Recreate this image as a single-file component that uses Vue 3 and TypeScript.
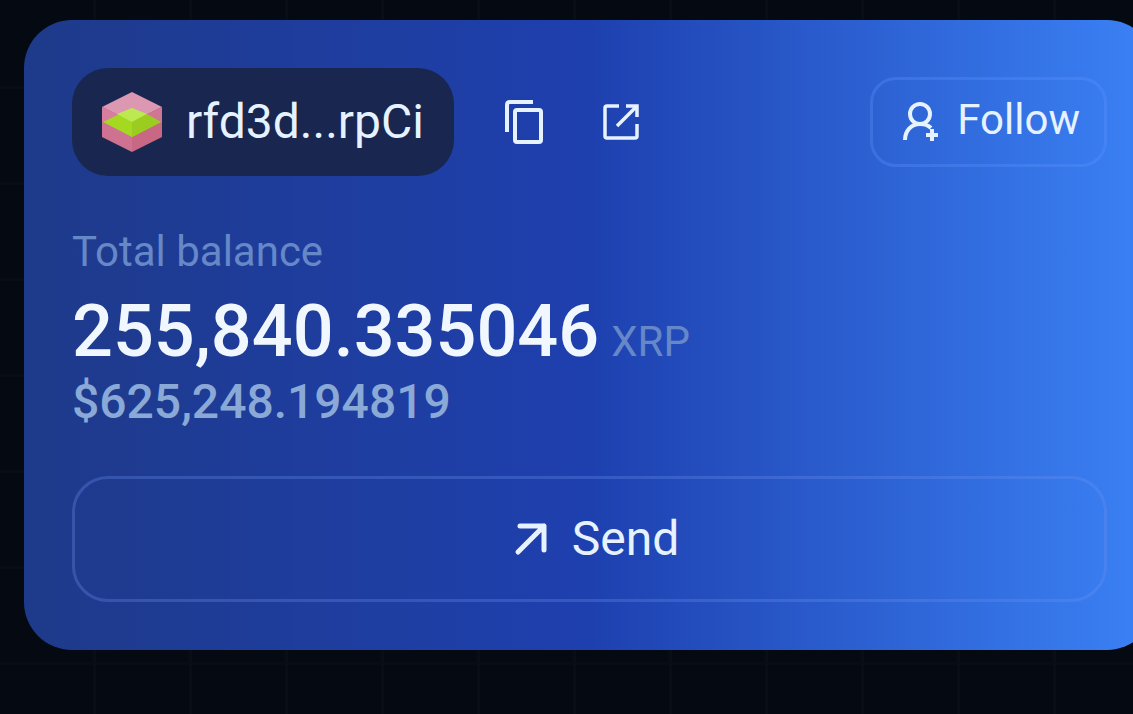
<script setup lang="ts">
import { ref } from 'vue'

interface Wallet {
  address: string
  balance: string
  currency: string
  fiat: string
}

const wallet: Wallet = {
  address: 'rfd3d...rpCi',
  balance: '255,840.335046',
  currency: 'XRP',
  fiat: '$625,248.194819',
}

const following = ref(false)
</script>

<template>
  <main class="page">
    <section class="card">
      <header class="top">
        <button class="address" type="button">
          <svg class="cube" viewBox="0 0 60 60" aria-hidden="true">
            <path d="M30 0 60 15 30 30 0 15Z" fill="#dc98b2" />
            <path d="M0 15 30 30V60L0 45Z" fill="#cf7291" />
            <path d="M60 15 30 30V60L60 45Z" fill="#c96885" />
            <path d="M0 15 17 23 1 30 0 30Z" fill="#d77d9e" />
            <path d="M60 15 43 23 59 30 60 30Z" fill="#cf7694" />
            <path d="M30 16 59 30 30 45 1 30Z" fill="#a5d921" />
            <path d="M30 16 45 22 30 30 15 22Z" fill="#bce951" />
            <path d="M30 30 45 22 59 30 30 45Z" fill="#9bcd20" />
          </svg>
          <span>{{ wallet.address }}</span>
        </button>
        <button class="icon-button" type="button" aria-label="Copy address">
          <svg width="40" height="46" viewBox="0 0 40 46" fill="none" stroke="currentColor" stroke-width="4" aria-hidden="true">
            <path d="M3 33V6Q3 3 6 3H29" />
            <rect x="11" y="11" width="26" height="32" rx="2" />
          </svg>
        </button>
        <a class="icon-button" href="#explorer" aria-label="Open in explorer">
          <svg width="38" height="38" viewBox="0 0 38 38" fill="none" stroke="currentColor" stroke-width="3.5" aria-hidden="true">
            <path d="M17 3H5Q3 3 3 5V33Q3 35 5 35H33Q35 35 35 33V21" />
            <path d="M24 3H35V14M35 3 15 23" />
          </svg>
        </a>
        <button class="follow" type="button" :aria-pressed="following" @click="following = !following">
          <svg width="38" height="44" viewBox="0 -4 38 44" fill="none" stroke="currentColor" stroke-width="4" aria-hidden="true">
            <circle cx="17" cy="12" r="10" />
            <path d="M2 38C2 29 8 22 17 22C21 22 25 23 28 26" />
            <path d="M29 27V39M23 33H35" />
          </svg>
          <span>Follow</span>
        </button>
      </header>

      <div class="totals">
        <p class="label">Total balance</p>
        <p class="balance">
          <strong>{{ wallet.balance }}</strong>
          <span>{{ wallet.currency }}</span>
        </p>
        <p class="fiat">{{ wallet.fiat }}</p>
      </div>

      <button class="send" type="button">
        <svg width="34" height="34" viewBox="0 0 34 34" fill="none" stroke="currentColor" stroke-width="5" stroke-linecap="round" stroke-linejoin="round" aria-hidden="true">
          <path d="M6 4H30V28M30 4 4 30" />
        </svg>
        <span>Send</span>
      </button>
    </section>
  </main>
</template>

<style>
body {
  margin: 0;
  background: #050a12;
}
</style>

<style scoped>
.page {
  box-sizing: border-box;
  min-height: 100vh;
  padding: 20px 0 64px 24px;
  overflow: hidden;
  background-color: #050a12;
  background-image:
    linear-gradient(to right, #090e16 3px, transparent 3px),
    linear-gradient(to bottom, #080d15 3px, transparent 3px);
  background-size: 96px 96px;
  background-position: 93px 86px;
  font-family: Roboto, "Liberation Sans", sans-serif;
  color: #e6f2ff;
}

.card {
  margin-right: -22px;
  padding: 48px;
  border-radius: 48px;
  background: linear-gradient(to right, #1e3a8a, #1e40af 50%, #3b82f6);
}

button {
  margin: 0;
  border: 0;
  background: none;
  font: inherit;
  color: inherit;
  cursor: pointer;
}

svg {
  display: block;
  flex: none;
}

.top {
  display: flex;
  align-items: center;
}

.address {
  display: flex;
  align-items: center;
  gap: 24px;
  height: 108px;
  padding: 0 30px;
  border-radius: 36px;
  background: #182650;
  font-size: 48px;
  line-height: 60px;
}

.cube {
  width: 60px;
  height: 60px;
}

.icon-button {
  display: flex;
  padding: 0;
  margin-left: 50px;
  color: #e6f2ff;
}

.icon-button + .icon-button {
  margin-left: 58px;
}

.follow {
  display: flex;
  align-items: center;
  gap: 16px;
  height: 90px;
  margin-left: auto;
  padding: 0 24px 4px 30px;
  border: 3px solid rgba(96, 150, 255, 0.3);
  border-radius: 26px;
  font-size: 42px;
  line-height: 48px;
}

.totals {
  margin: 48px 0 44px;
}

.totals p {
  margin: 0;
}

.totals .label {
  font-size: 42px;
  line-height: 56px;
  color: #6688c8;
}

.totals .balance {
  display: flex;
  align-items: baseline;
  gap: 12px;
  margin-top: 12px;
}

.balance strong {
  font-size: 72px;
  font-weight: 500;
  line-height: 80px;
  color: #f0f7ff;
}

.balance span {
  font-size: 42px;
  line-height: 48px;
  color: #6688c8;
}

.totals .fiat {
  font-size: 48px;
  font-weight: 500;
  line-height: 60px;
  color: #8aa9d6;
}

.send {
  display: flex;
  align-items: center;
  justify-content: center;
  gap: 24px;
  width: 100%;
  height: 126px;
  padding: 0 0 0 14px;
  border: 3px solid rgba(110, 145, 240, 0.3);
  border-radius: 36px;
  font-size: 48px;
  line-height: 60px;
}
</style>
